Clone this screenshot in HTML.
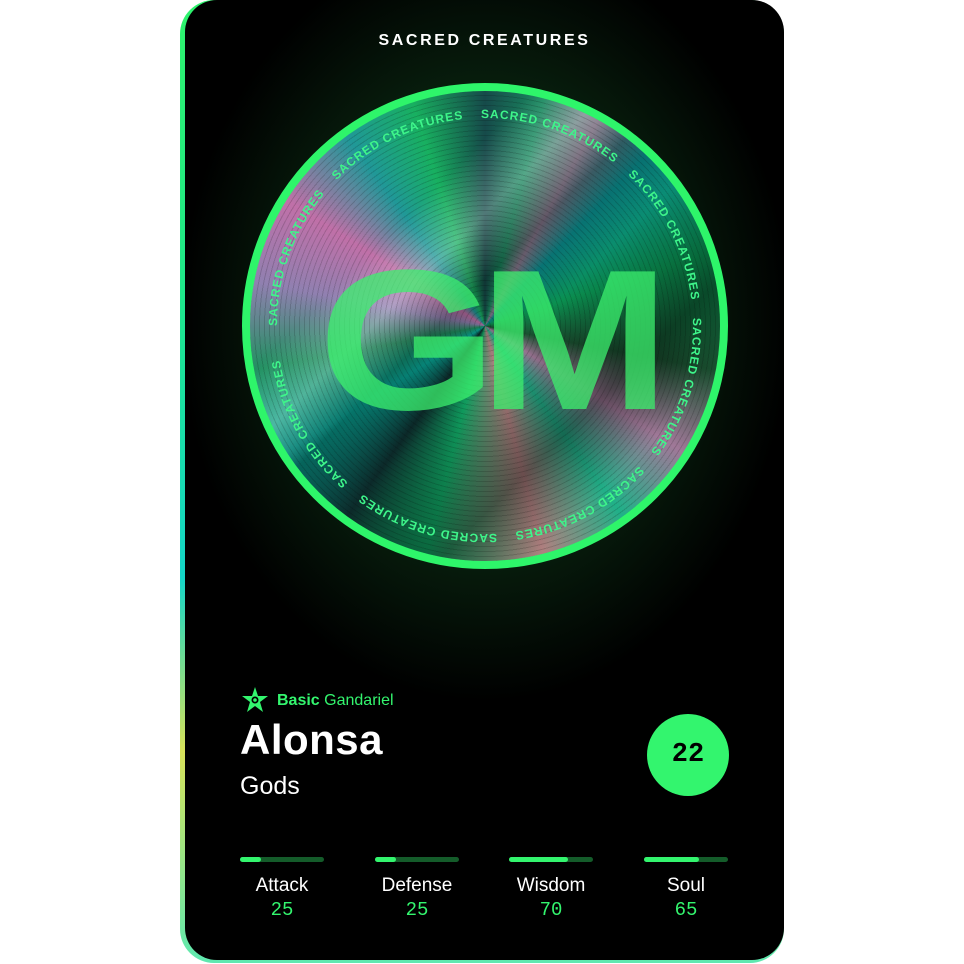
<!DOCTYPE html>
<html><head><meta charset="utf-8"><style>
html,body{margin:0;padding:0;background:#fff;width:964px;height:964px;overflow:hidden}
.card{position:absolute;left:180px;top:0;width:604px;height:963px;border-radius:34px;
background:linear-gradient(180deg,#2ef36c 0%,#1fe88a 30%,#14d6c8 60%,#d8e25a 78%,#5ee8b0 100%);}
.inner{position:absolute;left:5px;top:0;right:0;bottom:3px;border-radius:32px;background:#000;overflow:hidden}
.glow{position:absolute;left:-60px;top:-130px;width:720px;height:900px;background:radial-gradient(ellipse at 50% 50%,rgba(30,120,50,.55) 0%,rgba(20,80,35,.4) 35%,rgba(0,0,0,0) 60%)}
.title{position:absolute;top:32px;left:0;right:0;text-align:center;color:#fff;font:bold 16px "Liberation Sans",sans-serif;letter-spacing:2.6px}
.disc{position:absolute;left:57px;top:83px;width:470px;height:470px;border-radius:50%;border:8px solid #2ef56a;box-sizing:content-box;overflow:hidden;
background:conic-gradient(from 0deg,#164a4a,#1a8a60,#8a7a90,#0a8a8a 12%,#0a9050 20%,#1a5030 28%,#a07898 34%,#20b088 40%,#b08080 46%,#10a060 54%,#0c2a2a 60%,#08a898 66%,#209060 72%,#9080b0 78%,#c070a8 84%,#209898 90%,#18b060 95%,#164a4a);}
.disc:after{content:"";position:absolute;inset:0;background:repeating-radial-gradient(circle,rgba(0,0,0,.15) 0 1px,rgba(0,0,0,0) 1px 5px),linear-gradient(135deg,rgba(0,0,0,0) 30%,rgba(255,255,255,.25) 38%,rgba(0,0,0,.3) 45%,rgba(0,0,0,0) 55%,rgba(0,0,0,.4) 70%,rgba(0,0,0,0) 80%)}
.gm{position:absolute;left:0;right:0;top:150px;text-align:center;font:bold 200px/1 "Liberation Sans",sans-serif;color:rgba(60,240,110,.75);letter-spacing:-16px;z-index:2;transform:scaleX(1.15)}
.ring{position:absolute;left:57px;top:83px;width:486px;height:486px;z-index:3}
.star{position:absolute;left:56px;top:686px}
.basic{position:absolute;left:92px;top:692px;color:#33f56e;font:16px "Liberation Sans",sans-serif}
.name{position:absolute;left:55px;top:716px;color:#fff;font:bold 42px "Liberation Sans",sans-serif;letter-spacing:.5px}
.gods{position:absolute;left:55px;top:772px;color:#fff;font:25px "Liberation Sans",sans-serif}
.lvl{position:absolute;left:462px;top:714px;width:82px;height:82px;border-radius:50%;background:#33f56e;color:#000;text-align:center;font:bold 27px/82px "Liberation Mono",monospace;}
.stat{position:absolute;top:857px;width:84px;text-align:center}
.bar{height:5px;border-radius:3px;background:#145c2a;position:relative;margin-bottom:12px}
.bar i{position:absolute;left:0;top:0;bottom:0;border-radius:3px;background:#33f56e}
.lab{color:#fff;font:19px "Liberation Sans",sans-serif;line-height:24px}
.val{color:#33f56e;font:19px "Liberation Mono",monospace;line-height:24px}
</style></head><body>
<div class="card"><div class="inner">
<div class="glow"></div>
<div class="title">SACRED CREATURES</div>
<div class="disc"><div class="gm">GM</div></div>
<svg class="ring" viewBox="0 0 486 486"><defs><path id="c" d="M243,243 m-208,0 a208,208 0 1,1 416,0 a208,208 0 1,1 -416,0"/></defs>
<text font-family="Liberation Sans" font-weight="bold" font-size="12" letter-spacing="1.0" fill="#3ef58a" style="white-space:pre"><textPath href="#c">SACRED CREATURES    SACRED CREATURES    SACRED CREATURES    SACRED CREATURES    SACRED CREATURES    SACRED CREATURES    SACRED CREATURES    SACRED CREATURES</textPath></text></svg>
<svg class="star" width="28" height="28" viewBox="0 0 28 28"><path d="M14 1 L17 10 L27 10 L19 16 L22 26 L14 20 L6 26 L9 16 L1 10 L11 10Z" fill="#33f56e"/><circle cx="14" cy="14" r="3.5" fill="#000"/><circle cx="14" cy="14" r="1.8" fill="#33f56e"/></svg>
<div class="basic"><b>Basic</b> Gandariel</div>
<div class="name">Alonsa</div>
<div class="gods">Gods</div>
<div class="lvl">22</div>
<div class="stat" style="left:55px"><div class="bar"><i style="width:25%"></i></div><div class="lab">Attack</div><div class="val">25</div></div>
<div class="stat" style="left:190px"><div class="bar"><i style="width:25%"></i></div><div class="lab">Defense</div><div class="val">25</div></div>
<div class="stat" style="left:324px"><div class="bar"><i style="width:70%"></i></div><div class="lab">Wisdom</div><div class="val">70</div></div>
<div class="stat" style="left:459px"><div class="bar"><i style="width:65%"></i></div><div class="lab">Soul</div><div class="val">65</div></div>
</div></div>
</body></html>
